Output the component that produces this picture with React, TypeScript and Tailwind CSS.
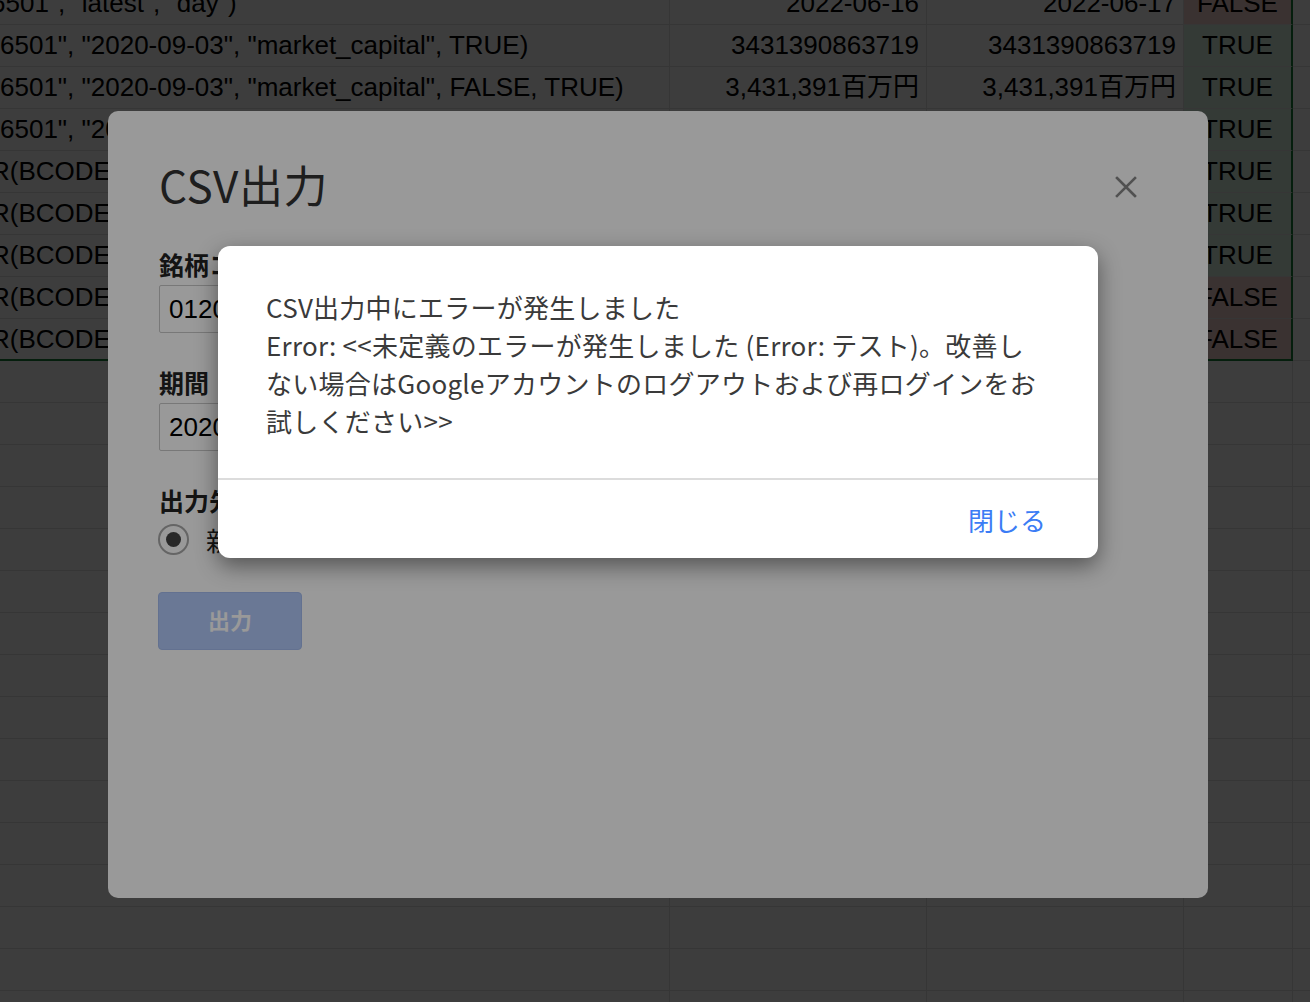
const sheetFont = { fontFamily: '"Liberation Sans", "Noto Sans CJK JP", sans-serif' };
const jpFont = { fontFamily: '"Noto Sans CJK JP", "Noto Sans", sans-serif' };

type Row = {
  formula: string;
  shift?: boolean;
  b?: string;
  c?: string;
  flag?: "TRUE" | "FALSE";
};

const rows: Row[] = [
  { formula: '6501", "latest", "day")', shift: true, b: "2022-06-16", c: "2022-06-17", flag: "FALSE" },
  { formula: '6501", "2020-09-03", "market_capital", TRUE)', b: "3431390863719", c: "3431390863719", flag: "TRUE" },
  { formula: '6501", "2020-09-03", "market_capital", FALSE, TRUE)', b: "3,431,391百万円", c: "3,431,391百万円", flag: "TRUE" },
  { formula: '6501", "2020-09-03", "market_capital", FALSE)', b: "3431390", c: "3431390", flag: "TRUE" },
  { formula: 'R(BCODE("6501", "2020-09-03", "close"))', shift: true, b: "1234", c: "1234", flag: "TRUE" },
  { formula: 'R(BCODE("6501", "2020-09-03", "open"))', shift: true, b: "1230", c: "1230", flag: "TRUE" },
  { formula: 'R(BCODE("6501", "2020-09-03", "high"))', shift: true, b: "1250", c: "1250", flag: "TRUE" },
  { formula: 'R(BCODE("6501", "2020-09-03", "low"))', shift: true, b: "1210", c: "1212", flag: "FALSE" },
  { formula: 'R(BCODE("6501", "2020-09-03", "volume"))', shift: true, b: "804100", c: "804300", flag: "FALSE" },
];

const emptyRows = Array.from({ length: 16 });

const Sheet = () => {
  return (
    <div className="-mt-[17px] grid grid-cols-[669px_258px_257px_109px_1fr] text-[26px] text-black" style={sheetFont}>
      {rows.map((r, i) => {
        const last = i === rows.length - 1;
        const bottom = last ? "border-b-2 border-b-[#188038]" : "border-b border-b-[#e2e2e2]";
        return (
          <div key={i} className="contents">
            <div className={`flex h-[42px] items-center overflow-hidden whitespace-nowrap ${bottom}`}>
              <span className={r.shift ? "-ml-[9px]" : ""}>{r.formula}</span>
            </div>
            <div className={`flex h-[42px] items-center justify-end border-r border-r-[#e2e2e2] border-l border-l-[#e2e2e2] pr-[7px] whitespace-nowrap ${bottom}`}>
              {r.b}
            </div>
            <div className={`flex h-[42px] items-center justify-end border-r border-r-[#e2e2e2] pr-[7px] whitespace-nowrap ${bottom}`}>
              {r.c}
            </div>
            <div
              className={`flex h-[42px] items-center justify-center border-r-2 border-r-[#188038] ${bottom} ${
                r.flag === "TRUE" ? "bg-[#d9f2e4]" : "bg-[#f6d2cc]"
              }`}
            >
              {r.flag}
            </div>
            <div className="h-[42px] border-b border-b-[#e2e2e2]" />
          </div>
        );
      })}
      {emptyRows.map((_, i) => (
        <div key={`e${i}`} className="contents">
          <div className="h-[42px] border-b border-[#e2e2e2]" />
          <div className="h-[42px] border-b border-l border-r border-[#e2e2e2]" />
          <div className="h-[42px] border-b border-r border-[#e2e2e2]" />
          <div className="h-[42px] border-b border-r border-[#e2e2e2]" />
          <div className="h-[42px] border-b border-[#e2e2e2]" />
        </div>
      ))}
    </div>
  );
};

const ExportDialog = () => {
  return (
    <div
      className="absolute left-[108px] top-[111px] flex h-[787px] w-[1100px] flex-col rounded-[10px] bg-white px-[51px] pt-[43px]"
      style={jpFont}
    >
      <h1 className="text-[44px] leading-[60px] font-normal tracking-[0.5px] text-[#333]">CSV出力</h1>
      <button className="absolute right-[70px] top-[64px] text-[#888]" aria-label="close">
        <svg width="24" height="24" viewBox="0 0 24 24" fill="none" stroke="currentColor" strokeWidth="2.6" strokeLinecap="square">
          <path d="M3 3 L21 21 M21 3 L3 21" />
        </svg>
      </button>

      <label className="mt-[32px] text-[25px] leading-[36px] font-bold text-[#222]">銘柄コード</label>
      <div
        className="mt-[3px] flex h-[48px] w-[420px] items-center rounded-[2px] border border-[#c8c8c8] pl-[9px] text-[26px] text-black"
        style={sheetFont}
      >
        0120,6501
      </div>

      <label className="mt-[31px] text-[25px] leading-[36px] font-bold text-[#222]">期間</label>
      <div
        className="mt-[3px] flex h-[48px] w-[420px] items-center rounded-[2px] border border-[#c8c8c8] pl-[9px] text-[26px] text-black"
        style={sheetFont}
      >
        2020-09-03
      </div>

      <label className="mt-[31px] text-[25px] leading-[36px] font-bold text-[#222]">出力先</label>
      <div className="mt-[3px] flex h-[36px] items-center gap-[17px]">
        <span className="-ml-px flex h-[31px] w-[31px] items-center justify-center rounded-full border-2 border-[#a8a8a8]">
          <span className="h-[15px] w-[15px] rounded-full bg-[#444]" />
        </span>
        <span className="text-[26px] text-[#222]">新規シート</span>
      </div>

      <button className="mt-[35px] -ml-px flex h-[58px] w-[144px] items-center justify-center rounded-[4px] border border-[#a5bdf0] bg-[#b1c8f8] pb-[4px] text-[22px] font-bold text-white">
        出力
      </button>
    </div>
  );
};

const ErrorDialog = () => {
  return (
    <div
      className="absolute left-[218px] top-[246px] w-[880px] rounded-[12px] bg-white shadow-[0_8px_22px_rgba(0,0,0,0.45)]"
      style={jpFont}
    >
      <div className="pl-[48px] pr-[30px] pt-[42px] pb-[38px] text-[26px] leading-[38px] tracking-[0.25px] text-[#3a3a3a]">
        <p>CSV出力中にエラーが発生しました</p>
        <p>
          Error: &lt;&lt;未定義のエラーが発生しました (Error: テスト)。改善し
          <br />
          ない場合はGoogleアカウントのログアウトおよび再ログインをお
          <br />
          試しください&gt;&gt;
        </p>
      </div>
      <div className="border-t-2 border-[#dcdcdc]" />
      <div className="flex h-[78px] items-center justify-end pr-[52px]">
        <button className="text-[26px] text-[#3b7cf5]">閉じる</button>
      </div>
    </div>
  );
};

export default function App() {
  return (
    <div className="relative h-[1002px] w-full overflow-hidden bg-white">
      <Sheet />
      <div className="absolute inset-0 bg-black/60" />
      <ExportDialog />
      <div className="absolute inset-0 bg-black/40" />
      <ErrorDialog />
    </div>
  );
}
